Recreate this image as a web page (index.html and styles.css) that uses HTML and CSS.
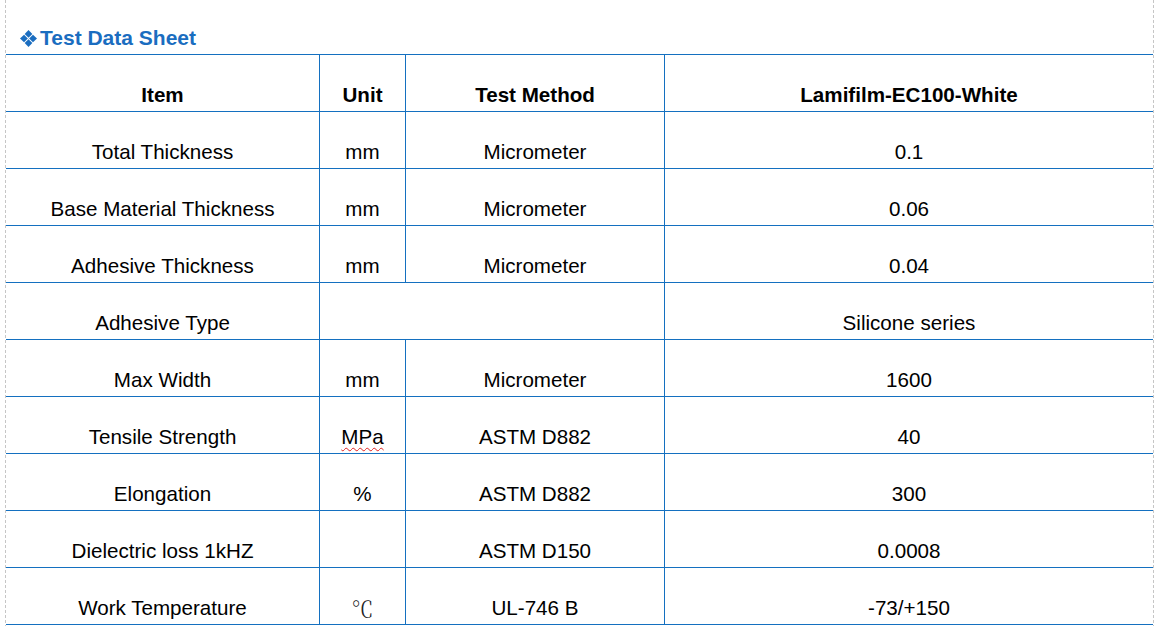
FILE: index.html
```html
<!DOCTYPE html>
<html>
<head>
<meta charset="utf-8">
<link rel="stylesheet" href="styles.css">
</head>
<body>
<div class="page">
  <h1 class="title">
    <svg class="diamond" width="17" height="17" viewBox="0 0 16 16" aria-hidden="true">
      <g fill="#1a6dc0">
        <path d="M8 0 L11.6 3.8 L8 7.4 L4.4 3.8 Z"/>
        <path d="M8 8.6 L11.6 12.2 L8 16 L4.4 12.2 Z"/>
        <path d="M0 8 L3.8 4.4 L7.4 8 L3.8 11.6 Z"/>
        <path d="M8.6 8 L12.2 4.4 L16 8 L12.2 11.6 Z"/>
      </g>
    </svg>
    <span>Test Data Sheet</span>
  </h1>
  <div class="sheet">
    <div class="cell head">Item</div>
    <div class="cell head sep">Unit</div>
    <div class="cell head sep">Test Method</div>
    <div class="cell head sep">Lamifilm-EC100-White</div>

    <div class="cell">Total Thickness</div>
    <div class="cell sep">mm</div>
    <div class="cell sep">Micrometer</div>
    <div class="cell sep">0.1</div>

    <div class="cell">Base Material Thickness</div>
    <div class="cell sep">mm</div>
    <div class="cell sep">Micrometer</div>
    <div class="cell sep">0.06</div>

    <div class="cell">Adhesive Thickness</div>
    <div class="cell sep">mm</div>
    <div class="cell sep">Micrometer</div>
    <div class="cell sep">0.04</div>

    <div class="cell">Adhesive Type</div>
    <div class="cell sep span2"></div>
    <div class="cell sep">Silicone series</div>

    <div class="cell">Max Width</div>
    <div class="cell sep">mm</div>
    <div class="cell sep">Micrometer</div>
    <div class="cell sep">1600</div>

    <div class="cell">Tensile Strength</div>
    <div class="cell sep"><span class="squiggle">MPa</span></div>
    <div class="cell sep">ASTM D882</div>
    <div class="cell sep">40</div>

    <div class="cell">Elongation</div>
    <div class="cell sep">%</div>
    <div class="cell sep">ASTM D882</div>
    <div class="cell sep">300</div>

    <div class="cell">Dielectric loss 1kHZ</div>
    <div class="cell sep"></div>
    <div class="cell sep">ASTM D150</div>
    <div class="cell sep">0.0008</div>

    <div class="cell">Work Temperature</div>
    <div class="cell sep"><span class="deg">℃</span></div>
    <div class="cell sep">UL-746 B</div>
    <div class="cell sep">-73/+150</div>
  </div>
</div>
</body>
</html>
```
FILE: styles.css
```css
html, body {
  margin: 0;
  padding: 0;
  background: #ffffff;
}

body {
  font-family: "Liberation Sans", Arial, sans-serif;
  color: #000000;
  width: 1158px;
  height: 626px;
  overflow: hidden;
}

.page {
  margin-left: 5px;
  width: 1149px;
  height: 626px;
  box-sizing: border-box;
  padding-left: 1px;
  padding-right: 1px;
  background:
    linear-gradient(#c6c6c6 60%, transparent 60%) left top / 1px 5px repeat-y,
    linear-gradient(#c6c6c6 60%, transparent 60%) right top / 1px 5px repeat-y;
}

.title {
  margin: 0;
  height: 54px;
  box-sizing: border-box;
  padding-left: 14px;
  padding-top: 22px;
  display: flex;
  align-items: center;
  gap: 3px;
  font-size: 21px;
  line-height: 24px;
  font-weight: bold;
  color: #1a6dc0;
}

.diamond {
  display: block;
  flex: none;
}

.sheet {
  display: grid;
  grid-template-columns: 313px 86px 259px 489px;
  grid-auto-rows: 57px;
  border-top: 1px solid #1470c0;
  width: 1147px;
}

.cell {
  box-sizing: border-box;
  border-bottom: 1px solid #1470c0;
  display: flex;
  align-items: flex-end;
  justify-content: center;
  padding-bottom: 5px;
  font-size: 20.6px;
  line-height: 23px;
  white-space: nowrap;
}

.sep {
  border-left: 1px solid #1470c0;
}

.span2 {
  grid-column: span 2;
}

.head {
  font-weight: bold;
}

.squiggle {
  text-decoration: underline wavy #e02020;
  text-decoration-thickness: 1px;
  text-underline-offset: 3px;
}

.deg {
  font-family: "Noto Serif CJK SC", "Noto Sans CJK SC", serif;
  font-weight: 300;
  font-size: 22px;
  color: #222;
}
```
